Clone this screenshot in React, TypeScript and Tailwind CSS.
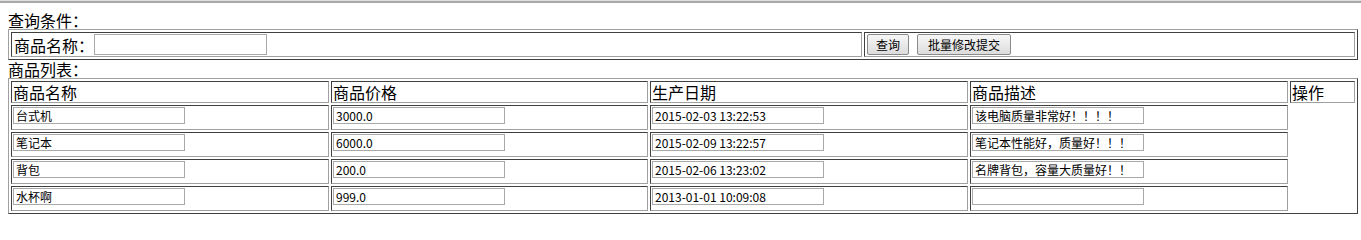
import React from 'react';

const products = [
  { name: '台式机', price: '3000.0', date: '2015-02-03 13:22:53', desc: '该电脑质量非常好！！！！' },
  { name: '笔记本', price: '6000.0', date: '2015-02-09 13:22:57', desc: '笔记本性能好，质量好！！！' },
  { name: '背包', price: '200.0', date: '2015-02-06 13:23:02', desc: '名牌背包，容量大质量好！！' },
  { name: '水杯啊', price: '999.0', date: '2013-01-01 10:09:08', desc: '' },
];

const tableCls =
  'w-[1350px] table-fixed border-separate border-spacing-[2px] border border-solid border-t-[#a0a0a0] border-l-[#a0a0a0] border-r-[#404040] border-b-[#404040]';
const cellCls =
  'p-[1px] align-top text-left font-normal border border-solid border-t-[#404040] border-l-[#404040] border-r-[#a0a0a0] border-b-[#a0a0a0]';
const inputCls =
  'block w-[172px] h-[17px] px-[2px] text-[12px] leading-[15px] text-black bg-white border border-solid border-[#a9a9a9] outline-none';

export default function App() {
  return (
    <div className="w-[1361px] h-[221px] bg-white text-black text-[16px] leading-[18px] font-['Noto_Sans_CJK_SC',sans-serif] overflow-hidden">
      {/* window edge */}
      <div className="h-[1px] bg-[#dedede]" />
      <div className="h-[2px] bg-[#a8a8a8]" />

      <div className="pl-[8px] pt-[8px]">
        <div>查询条件：</div>
        <table className={tableCls}>
          <tbody>
            <tr>
              <td className={cellCls + ' w-[851px] h-[25px]'}>
                <div className="flex items-center h-[21px]">
                  <span className="pl-[1px]">商品名称：</span>
                  <input
                    type="text"
                    className="w-[173px] h-[21px] px-[2px] text-[12px] bg-white border border-solid border-[#a9a9a9] outline-none"
                  />
                </div>
              </td>
              <td className={cellCls}>
                <div className="flex items-center gap-[8px] h-[21px] pl-[1px]">
                  <button className="w-[42px] h-[21px] text-[12px] leading-[19px] bg-gradient-to-b from-[#f7f7f7] to-[#dcdcdc] border border-solid border-[#8a8a8a] rounded-[2px]">
                    查询
                  </button>
                  <button className="w-[94px] h-[21px] text-[12px] leading-[19px] bg-gradient-to-b from-[#f7f7f7] to-[#dcdcdc] border border-solid border-[#8a8a8a] rounded-[2px]">
                    批量修改提交
                  </button>
                </div>
              </td>
            </tr>
          </tbody>
        </table>

        <div>商品列表：</div>
        <table className={tableCls}>
          <thead>
            <tr>
              <th className={cellCls + ' w-[318px] h-[22px]'}>商品名称</th>
              <th className={cellCls + ' w-[317px]'}>商品价格</th>
              <th className={cellCls + ' w-[318px]'}>生产日期</th>
              <th className={cellCls + ' w-[318px]'}>商品描述</th>
              <th className={cellCls}>操作</th>
            </tr>
          </thead>
          <tbody>
            {products.map((p, i) => (
              <tr key={i}>
                <td className={cellCls + ' h-[25px]'}>
                  <input type="text" defaultValue={p.name} className={inputCls} />
                </td>
                <td className={cellCls}>
                  <input type="text" defaultValue={p.price} className={inputCls} />
                </td>
                <td className={cellCls}>
                  <input type="text" defaultValue={p.date} className={inputCls} />
                </td>
                <td className={cellCls}>
                  <input type="text" defaultValue={p.desc} className={inputCls} />
                </td>
              </tr>
            ))}
          </tbody>
        </table>
      </div>
    </div>
  );
}
